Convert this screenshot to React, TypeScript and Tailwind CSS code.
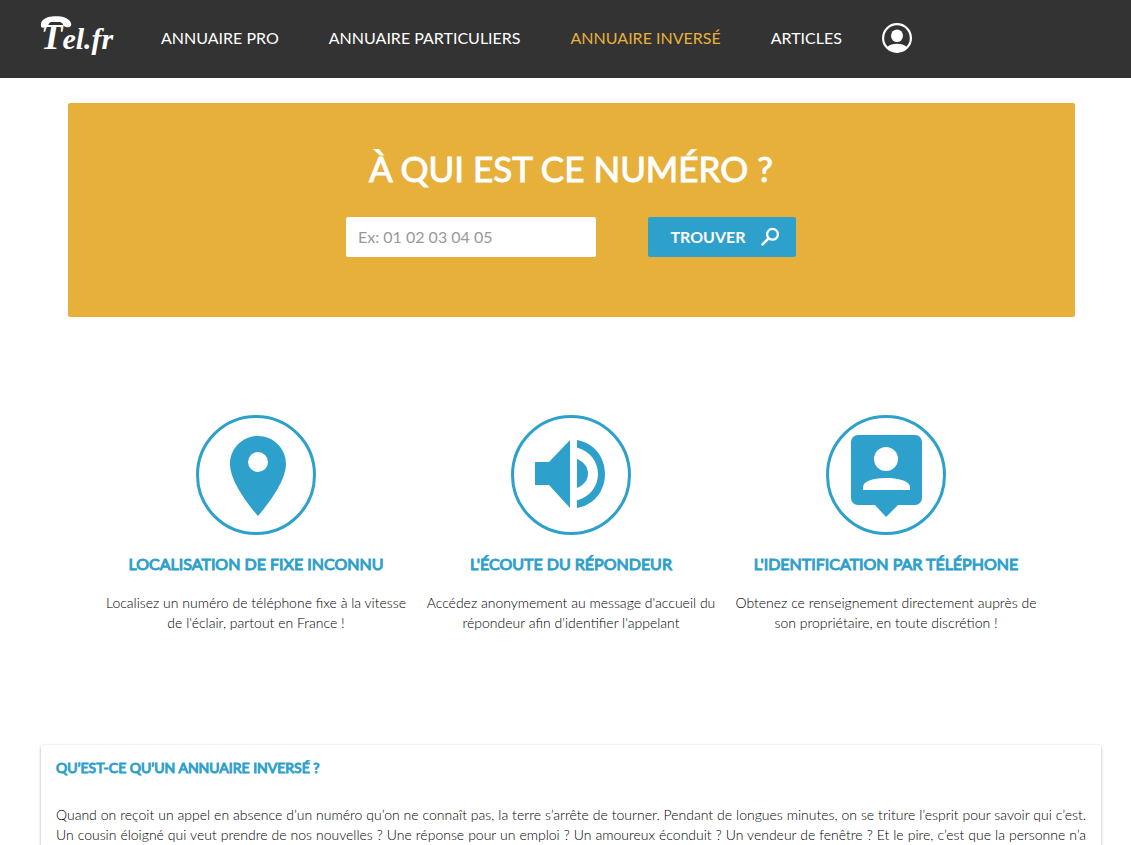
import React, { useState } from 'react';

const NAV_LINKS = [
  { label: 'ANNUAIRE PRO', href: '#pro' },
  { label: 'ANNUAIRE PARTICULIERS', href: '#particuliers' },
  { label: 'ANNUAIRE INVERSÉ', href: '#inverse', active: true },
  { label: 'ARTICLES', href: '#articles' },
];

// ─── Icons ─────────────────────────────────────────────────
function Logo() {
  return (
    <svg viewBox="0 0 72 48" className="h-12 w-[72px] overflow-visible" fill="#fff" role="img" aria-label="Tel.fr">
      {/* handset lying over the wordmark */}
      <path d="M1 12C0 6 6 3 12 2.500C19 1.500 29 3 31 9C32 12 30 14 26 13C22 12 24 9 20 8L11 8C8 9 9 12 6 13C3 14 1 14 1 12Z" />
      <text x="1" y="35" fontFamily="Liberation Serif, serif" fontSize="30" fontStyle="italic" fontWeight="700">
        <tspan fontSize="35">T</tspan>
        <tspan>el.fr</tspan>
      </text>
    </svg>
  );
}

function UserIcon() {
  return (
    <svg viewBox="0 0 30 30" className="size-[30px]" fill="#fff">
      <circle cx="15" cy="15" r="13.9" fill="none" stroke="#fff" strokeWidth="2.2" />
      <ellipse cx="15" cy="12.8" rx="6" ry="6.3" />
      <path d="M5 24C8 21.6 11 20.8 15 20.8S22 21.6 25 24C22.500 27 19 29 15 29S7.500 27 5 24Z" />
    </svg>
  );
}

function SearchIcon() {
  return (
    <svg viewBox="0 0 20 20" className="size-5" fill="none" stroke="#fff">
      <circle cx="12.500" cy="7.300" r="5.400" strokeWidth="2.300" />
      <path d="M8.600 11.400L1.800 18.200" strokeWidth="2.600" />
    </svg>
  );
}

function PinIcon() {
  return (
    <path
      fillRule="evenodd"
      d="M62 21C46.500 21 34 33.500 34 49C34 70 62 101 62 101S90 70 90 49C90 33.500 77.500 21 62 21ZM62 57A10 10 0 1 1 62 37A10 10 0 0 1 62 57Z"
    />
  );
}

function SpeakerIcon() {
  return (
    <path d="M24 47H38L59 25V93L38 70H24ZM66 25C83 28 94 42 94 59S83 90 66 93V85.500C79 82 87 71 87 59S79 36 66 32.500ZM66 44C73 47 77 52 77 58.500S73 70 66 73Z" />
  );
}

function ContactIcon() {
  return (
    <path
      fillRule="evenodd"
      d="M32 20H89A7 7 0 0 1 96 27V83A7 7 0 0 1 89 90H72L60 102L49 90H32A7 7 0 0 1 25 83V27A7 7 0 0 1 32 20ZM60 32A12 12 0 1 0 60 56A12 12 0 1 0 60 32ZM37 75H84V72C84 66 72 63 60 63S37 66 37 72Z"
    />
  );
}

const FEATURES = [
  {
    title: 'LOCALISATION DE FIXE INCONNU',
    text: "Localisez un numéro de téléphone fixe à la vitesse de l'éclair, partout en France !",
    icon: <PinIcon />,
  },
  {
    title: "L'ÉCOUTE DU RÉPONDEUR",
    text: "Accédez anonymement au message d'accueil du répondeur afin d'identifier l'appelant",
    icon: <SpeakerIcon />,
  },
  {
    title: "L'IDENTIFICATION PAR TÉLÉPHONE",
    text: 'Obtenez ce renseignement directement auprès de son propriétaire, en toute discrétion !',
    icon: <ContactIcon />,
  },
];

// ─── Header ────────────────────────────────────────────────
function Header() {
  return (
    <header className="flex h-[78px] items-center bg-[#333] pb-0.5 pl-10">
      <a href="#accueil"><Logo /></a>
      <nav className="ml-[49px] flex items-center gap-[50px] text-base text-white">
        {NAV_LINKS.map((l) => (
          <a key={l.label} href={l.href} className={l.active ? 'text-[#e6b03b]' : 'hover:text-[#e6b03b]'}>
            {l.label}
          </a>
        ))}
      </nav>
      <a href="#compte" aria-label="Mon compte" className="ml-10"><UserIcon /></a>
    </header>
  );
}

// ─── Search banner ─────────────────────────────────────────
function SearchBanner() {
  const [phone, setPhone] = useState('');

  return (
    <section className="mx-auto mt-[25px] w-[95%] rounded-xs bg-[#e6b03b] pt-10 pb-[60px]">
      <h1 className="text-center text-[35px] leading-[50px] text-white [-webkit-text-stroke:1px_#fff]">
        À QUI EST CE NUMÉRO ?
      </h1>
      <form className="mt-6 flex justify-center gap-[52px]" onSubmit={(e) => e.preventDefault()}>
        <input
          type="tel"
          aria-label="Numéro de téléphone"
          value={phone}
          onChange={(e) => setPhone(e.target.value)}
          placeholder="Ex: 01 02 03 04 05"
          className="h-10 w-[250px] rounded-xs bg-white px-3 pb-0.5 text-base text-[#555] placeholder:text-[#999] focus:outline-none"
        />
        <button
          type="submit"
          className="flex h-10 w-[148px] items-center justify-center gap-3.5 rounded-xs bg-[#2da0cb] pl-1.5 text-base font-bold text-white"
        >
          TROUVER
          <SearchIcon />
        </button>
      </form>
    </section>
  );
}

export default function App() {
  return (
    <div className="flex min-h-screen flex-col bg-white font-['Lato',sans-serif] text-black">
      <Header />
      <main className="flex flex-1 flex-col pr-[30px] pl-[41px]">
        <SearchBanner />

        <section className="mx-auto mt-[98px] grid w-full max-w-[945px] grid-cols-3">
          {FEATURES.map((f) => (
            <article key={f.title} className="flex flex-col items-center text-center">
              <svg viewBox="0 0 120 120" className="size-[120px]" fill="#2da0cb">
                <circle cx="60" cy="60" r="58.5" fill="none" stroke="#2da0cb" strokeWidth="3" />
                {f.icon}
              </svg>
              <h2 className="mt-[19px] text-base leading-5 text-[#2da0cb] [-webkit-text-stroke:1px_#2da0cb]">{f.title}</h2>
              <p className="mt-[19px] text-sm leading-5 font-light">{f.text}</p>
            </article>
          ))}
        </section>

        <section className="mt-28 flex-1 rounded-t-xs bg-white px-[15px] pt-[13px] shadow-[0_1px_3px_rgba(0,0,0,0.35)]">
          <h2 className="text-sm leading-5 text-[#2da0cb] [-webkit-text-stroke:1px_#2da0cb]">
            QU’EST-CE QU’UN ANNUAIRE INVERSÉ ?
          </h2>
          <p className="mt-[27px] text-justify text-sm leading-5 font-light [text-align-last:justify]">
            Quand on reçoit un appel en absence d’un numéro qu’on ne connaît pas, la terre s’arrête de tourner. Pendant
            de longues minutes, on se triture l’esprit pour savoir qui c’est. Un cousin éloigné qui veut prendre de nos
            nouvelles ? Une réponse pour un emploi ? Un amoureux éconduit ? Un vendeur de fenêtre ? Et le pire, c’est
            que la personne n’a
          </p>
        </section>
      </main>
    </div>
  );
}
